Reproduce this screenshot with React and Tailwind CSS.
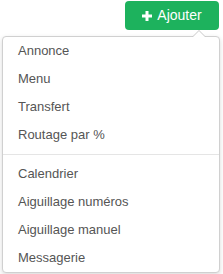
import React from 'react'

const groups = [
  ['Annonce', 'Menu', 'Transfert', 'Routage par %'],
  ['Calendrier', 'Aiguillage numéros', 'Aiguillage manuel', 'Messagerie'],
]

const App = () => {
  return (
    <div className="w-[223px] h-[274px] bg-white" style={{ fontFamily: '"Liberation Sans", Arial, sans-serif' }}>
      <div className="flex justify-end pr-[4px] pt-[1px]">
        <button className="flex items-center gap-[5px] w-[94px] h-[29px] justify-center rounded-[4px] bg-[#1db25d] text-white text-[14px]">
          <svg width="10" height="10" viewBox="0 0 10 10">
            <rect x="3.5" y="0" width="3" height="10" fill="white" />
            <rect x="0" y="3.5" width="10" height="3" fill="white" />
          </svg>
          Ajouter
        </button>
      </div>

      {/* Dropdown */}
      <div className="relative ml-[2px] mt-[6px] w-[218px] rounded-[4px] border border-[#d0d0d0] bg-white shadow-[0_2px_5px_rgba(0,0,0,0.15)]">
        <div className="absolute -top-[7px] right-[13px] w-0 h-0 border-x-[7px] border-x-transparent border-b-[7px] border-b-[#c8c8c8]" />
        <div className="absolute -top-[6px] right-[14px] w-0 h-0 border-x-[6px] border-x-transparent border-b-[6px] border-b-white" />
        {groups.map((items, i) => (
          <div key={i}>
            {i > 0 && (
              <div className="h-[11px] flex items-center">
                <div className="w-full h-px bg-[#e5e5e5]" />
              </div>
            )}
            {items.map((label) => (
              <div key={label} className="h-[28px] flex items-center pl-[15px] text-[13px] text-[#555]">
                {label}
              </div>
            ))}
          </div>
        ))}
      </div>
    </div>
  )
}

export default App
